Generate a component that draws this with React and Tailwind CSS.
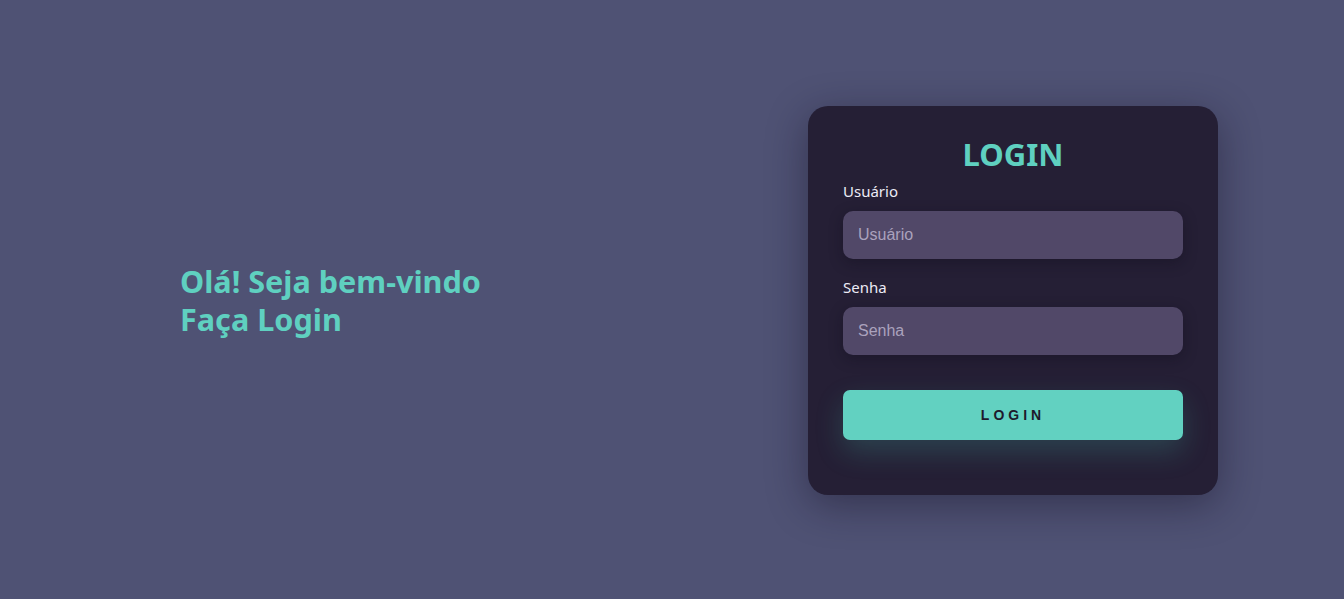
export default function App() {
  return (
    <div className="w-full h-[599px] bg-[#4f5274] flex items-center justify-between pl-[180px] pr-[126px] font-['Noto_Sans',sans-serif]">
      <div className="text-[#5fd0c0] font-bold text-[30.6px] leading-[38px] mt-[1px]">
        <div>Olá! Seja bem-vindo</div>
        <div>Faça Login</div>
      </div>
      <div className="w-[410px] h-[389px] mt-[2px] rounded-[20px] bg-[#251f35] shadow-[0_10px_40px_rgba(20,16,35,0.45)] px-[35px] pt-[28px] flex flex-col">
        <h1 className="text-center text-[#5fd0c0] font-bold text-[31px] leading-[40px]">LOGIN</h1>
        <label className="mt-[5px] text-[#ecebf5] text-[15px] leading-[24px]">Usuário</label>
        <input
          className="mt-[8px] h-[48px] w-full rounded-[10px] bg-[#514868] px-[15px] text-[16px] text-[#ddd] placeholder-[#aaa2bd] outline-none shadow-[0_4px_14px_rgba(15,12,25,0.35)] font-['Liberation_Sans',sans-serif]"
          placeholder="Usuário"
        />
        <label className="mt-[16px] text-[#ecebf5] text-[15px] leading-[24px]">Senha</label>
        <input
          type="password"
          className="mt-[8px] h-[48px] w-full rounded-[10px] bg-[#514868] px-[15px] text-[16px] text-[#ddd] placeholder-[#aaa2bd] outline-none shadow-[0_4px_14px_rgba(15,12,25,0.35)] font-['Liberation_Sans',sans-serif]"
          placeholder="Senha"
        />
        <button className="mt-[35px] h-[50px] w-full rounded-[7px] bg-[#62d1c1] text-[#1e1a2c] font-bold text-[14px] tracking-[4px] font-['Liberation_Sans',sans-serif] shadow-[0_12px_28px_rgba(70,190,170,0.22)]">
          LOGIN
        </button>
      </div>
    </div>
  );
}
